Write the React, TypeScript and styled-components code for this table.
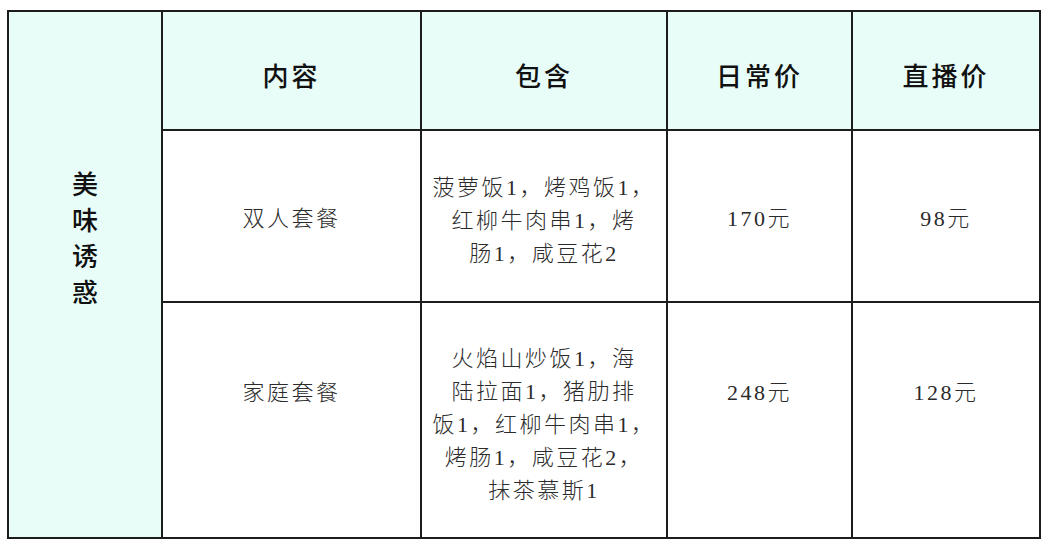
import styled, { createGlobalStyle } from 'styled-components'

const GlobalStyle = createGlobalStyle`
    html, body {
        margin: 0;
        padding: 0;
        background: #ffffff;
    }
`

const Page = styled.div`
    padding: 10px 0 0 7px;
`

const Table = styled.table`
    width: 1034px;
    table-layout: fixed;
    border-collapse: collapse;
    border: 2px solid #1c1c1c;
`

const Row = styled.tr<{ $height: number }>`
    height: ${props => props.$height}px;
`

const Cell = styled.td`
    border: 2px solid #1c1c1c;
    padding: 0;
    text-align: center;
    vertical-align: middle;
`

const HeadCell = styled(Cell)`
    background-color: #e8fdf8;
    color: #111;
    font-family: "Noto Sans CJK SC", sans-serif;
    font-weight: 500;
    font-size: 26px;
    letter-spacing: 3px;
    padding-top: 8px;
`

const SideCell = styled(Cell)`
    background-color: #e8fdf8;
`

const SideTitle = styled.div`
    width: 1em;
    margin: 0 auto;
    padding-bottom: 76px;
    font-family: "Noto Sans CJK SC", sans-serif;
    font-weight: 500;
    font-size: 26px;
    line-height: 36px;
    color: #111;
`

// $shift moves the text off the cell's middle: positive is down, negative is up
const BodyCell = styled(Cell)<{ $shift?: number }>`
    color: #2b2b2b;
    font-family: "Liberation Serif", "Noto Sans CJK SC", serif;
    font-weight: 300;
    font-size: 22px;
    line-height: 33px;
    letter-spacing: 2.5px;
    padding-top: ${props => Math.max(0, (props.$shift || 0) * 2)}px;
    padding-bottom: ${props => Math.max(0, -(props.$shift || 0) * 2)}px;
`

const columns = [154, 259, 246, 185, 188]

const rows = [
    {
        name: '双人套餐',
        items: ['菠萝饭1，烤鸡饭1，', '红柳牛肉串1，烤', '肠1，咸豆花2'],
        daily: '170元',
        live: '98元',
        height: 172,
        shift: 2,
    },
    {
        name: '家庭套餐',
        items: ['火焰山炒饭1，海', '陆拉面1，猪肋排', '饭1，红柳牛肉串1，', '烤肠1，咸豆花2，', '抹茶慕斯1'],
        daily: '248元',
        live: '128元',
        height: 236,
        shift: -28,
    },
]

export default function App() {
    return (
        <Page>
            <GlobalStyle />
            <Table>
                <colgroup>
                    {columns.map((w, i) => <col key={i} style={{ width: w }} />)}
                </colgroup>
                <tbody>
                    <Row $height={119}>
                        <SideCell rowSpan={3}>
                            <SideTitle>美味诱惑</SideTitle>
                        </SideCell>
                        <HeadCell>内容</HeadCell>
                        <HeadCell>包含</HeadCell>
                        <HeadCell>日常价</HeadCell>
                        <HeadCell>直播价</HeadCell>
                    </Row>
                    {rows.map(r => (
                        <Row $height={r.height} key={r.name}>
                            <BodyCell $shift={r.shift}>{r.name}</BodyCell>
                            <BodyCell $shift={4}>
                                {r.items.map((line, i) => <div key={i}>{line}</div>)}
                            </BodyCell>
                            <BodyCell $shift={r.shift}>{r.daily}</BodyCell>
                            <BodyCell $shift={r.shift}>{r.live}</BodyCell>
                        </Row>
                    ))}
                </tbody>
            </Table>
        </Page>
    )
}
